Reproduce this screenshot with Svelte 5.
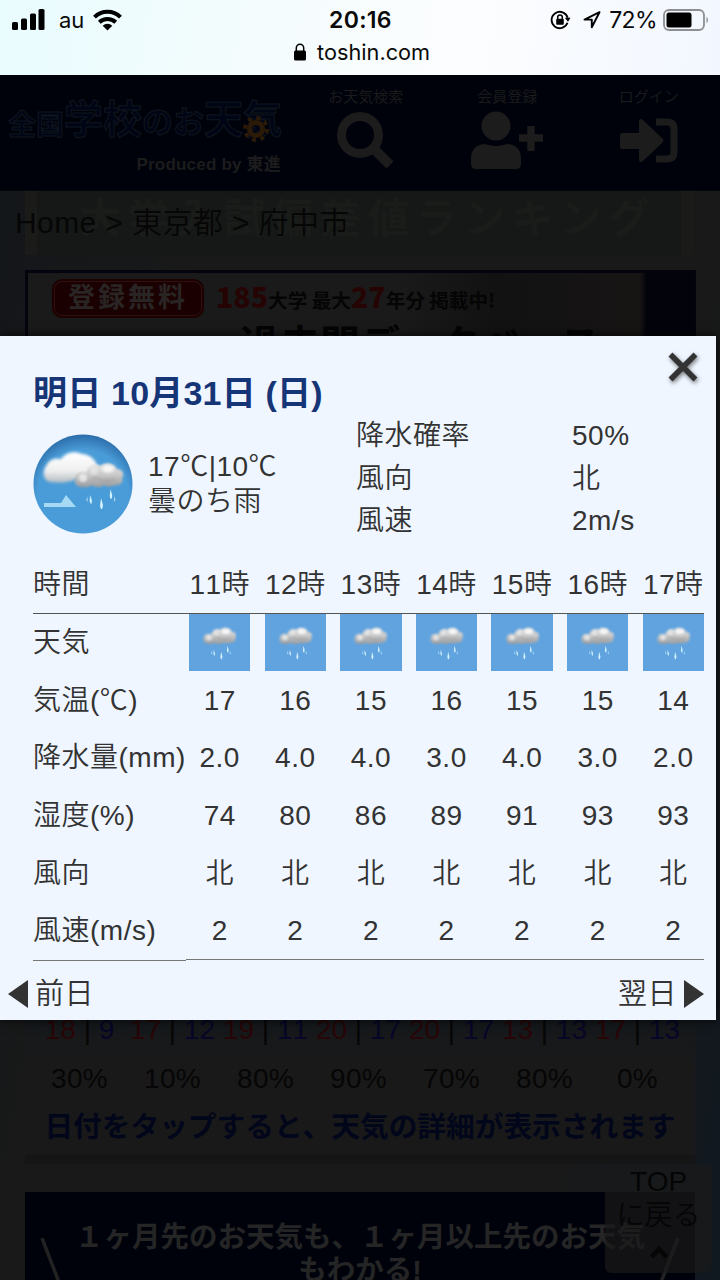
<script lang="ts">
  const summary = [
    { label: "降水確率", value: "50%" },
    { label: "風向", value: "北" },
    { label: "風速", value: "2m/s" },
  ];

  const hours = ["11時", "12時", "13時", "14時", "15時", "16時", "17時"];

  const rows = [
    { label: "気温(℃)", values: ["17", "16", "15", "16", "15", "15", "14"] },
    {
      label: "降水量(mm)",
      values: ["2.0", "4.0", "4.0", "3.0", "4.0", "3.0", "2.0"],
    },
    { label: "湿度(%)", values: ["74", "80", "86", "89", "91", "93", "93"] },
    { label: "風向", values: ["北", "北", "北", "北", "北", "北", "北"] },
    { label: "風速(m/s)", values: ["2", "2", "2", "2", "2", "2", "2"] },
  ];

  const week = [
    { high: 18, low: 9, rain: "30%" },
    { high: 17, low: 12, rain: "10%" },
    { high: 19, low: 11, rain: "80%" },
    { high: 20, low: 17, rain: "90%" },
    { high: 20, low: 17, rain: "70%" },
    { high: 13, low: 13, rain: "80%" },
    { high: 17, low: 13, rain: "0%" },
  ];
</script>

{#snippet rainCloud()}
  <g filter="url(#soft)">
    <path
      d="M8 28c-6 0-8-4-7-9 1-5 6-7 11-5 2-7 9-10 14-7 5-5 15-3 17 3 6 0 8 6 5 9 2 5-3 8-7 7-4 2-8 2-11 0-3 3-9 3-12 0-3 2-6 3-10 2z"
      fill="url(#grayCloud)"
    />
    <circle cx="9" cy="19" r="4" fill="#f4f4f4" opacity=".7" />
    <circle cx="20" cy="12" r="4" fill="#f2f2f2" opacity=".5" />
  </g>
  <g filter="url(#softer)">
    <ellipse cx="34" cy="10" rx="6" ry="3.500" fill="#fff" opacity=".8" />
    <path
      d="M18 21q3-4 7-1t8 0M32 24q4-5 10-3"
      fill="none"
      stroke="#8c8c8c"
      stroke-width="2"
      opacity=".4"
    />
  </g>
{/snippet}

{#snippet drops()}
  <g fill="#d4f2ff">
    <path d="M16 33l1.800 5v3l-1 1-1.200-3z" />
    <path d="M13 34l.8 4-.6 2-.8-2z" opacity=".7" />
    <path d="M27 36l2 7-.8 4-1.200 0-1-3z" />
    <path d="M36.500 27l1.700 6-.2 3.500h-1.800l-.4-3z" />
    <path d="M40.500 34l.9 4-.7 2-.8-2z" opacity=".7" />
  </g>
{/snippet}

<!-- shared gradients -->
<svg class="defs" width="0" height="0" aria-hidden="true">
  <defs>
    <linearGradient id="grayCloud" x1="0" y1="0" x2="0" y2="1">
      <stop offset="0" stop-color="#e6e6e6" />
      <stop offset=".5" stop-color="#c8c8c8" />
      <stop offset="1" stop-color="#979a9e" />
    </linearGradient>
    <linearGradient id="whiteCloud" x1="0" y1="0" x2="0" y2="1">
      <stop offset="0" stop-color="#fff" />
      <stop offset=".6" stop-color="#f0f0f0" />
      <stop offset="1" stop-color="#b5bdc2" />
    </linearGradient>
    <radialGradient id="sky" cx=".5" cy=".62" r=".62">
      <stop offset=".75" stop-color="#4a9cd8" />
      <stop offset="1" stop-color="#2b6daa" />
    </radialGradient>
    <filter id="soft" x="-20%" y="-20%" width="140%" height="140%">
      <feGaussianBlur stdDeviation="1.200" />
    </filter>
    <filter id="softer" x="-40%" y="-40%" width="180%" height="180%">
      <feGaussianBlur stdDeviation="1.800" />
    </filter>
  </defs>
</svg>

<div class="screen">
  <!-- Status bar -->
  <div class="status">
    <div class="status-row">
      <div class="status-left">
        <svg width="33" height="21" viewBox="0 0 33 21">
          <rect x="0" y="13" width="6" height="8" rx="1.5" />
          <rect x="9" y="9.500" width="6" height="11.500" rx="1.500" />
          <rect x="18" y="4.500" width="6" height="16.500" rx="1.500" />
          <rect x="26.500" y="0" width="6" height="21" rx="1.500" />
        </svg>
        <span class="carrier">au</span>
        <svg width="29" height="22" viewBox="0 0 29 22">
          <g fill="none" stroke="#000" stroke-width="4">
            <path d="M1.500 8.200a18.500 18.500 0 0 1 26 0" />
            <path d="M6.300 13.300a12 12 0 0 1 16.400 0" />
          </g>
          <path d="M14.500 21.500l-4.800-4.800a7 7 0 0 1 9.600 0z" />
        </svg>
      </div>
      <div class="clock">20:16</div>
      <div class="status-right">
        <svg width="21" height="20" viewBox="0 0 21 20">
          <path
            d="M17.500 12.800a8.200 8.200 0 1 1 .2-5"
            fill="none"
            stroke="#000"
            stroke-width="1.800"
          />
          <path d="M14.800 7.800h5.700l-2.500 4z" />
          <rect x="6.200" y="8.700" width="7.600" height="6" rx="1" />
          <path
            d="M7.700 9V7.200a2.300 2.300 0 0 1 4.600 0V9"
            fill="none"
            stroke="#000"
            stroke-width="1.500"
          />
        </svg>
        <svg class="arrow" width="18" height="18" viewBox="0 0 18 18">
          <path
            d="M16.500 1.200L1.500 8.600h7.300v7.600z"
            fill="none"
            stroke="#000"
            stroke-width="1.900"
            stroke-linejoin="round"
          />
        </svg>
        <span class="percent">72%</span>
        <svg width="46" height="22" viewBox="0 0 46 22">
          <rect
            x="1"
            y="1"
            width="40"
            height="20"
            rx="5"
            fill="none"
            stroke="#8d8f91"
            stroke-width="1.800"
          />
          <rect x="3.500" y="3.500" width="25" height="15" rx="2.500" />
          <path d="M43.500 7.500q3 3.500 0 7z" fill="#8d8f91" />
        </svg>
      </div>
    </div>
    <div class="address">
      <svg width="12" height="18" viewBox="0 0 12 18">
        <rect x="0" y="7.500" width="12" height="10" rx="1.500" />
        <path
          d="M2.300 8V5a3.700 3.700 0 0 1 7.400 0v3"
          fill="none"
          stroke="#000"
          stroke-width="1.500"
        />
      </svg>
      <span>toshin.com</span>
    </div>
  </div>

  <!-- Page behind the dialog -->
  <div class="page">
    <header class="header">
      <div class="brand">
        <div class="logo">
          <span class="small">全国</span><span class="big">学校</span><span
            class="mid">のお</span
          ><span class="big">天気</span>
          <svg class="gear" width="28" height="28" viewBox="-14 -14 28 28">
            <circle r="6.500" fill="none" stroke="#2b1a08" stroke-width="5" />
            <circle
              r="11"
              fill="none"
              stroke="#2b1a08"
              stroke-width="4"
              stroke-dasharray="4 4.640"
            />
          </svg>
        </div>
        <div class="produced">Produced by 東進</div>
      </div>
      <div class="menu">
        <div class="menu-item">
          <span>お天気検索</span>
          <svg width="60" height="60" viewBox="0 0 60 60">
            <circle
              cx="24"
              cy="24"
              r="18.500"
              fill="none"
              stroke="#1c1c1c"
              stroke-width="9"
            />
            <path
              d="M39 39l15 15"
              stroke="#1c1c1c"
              stroke-width="10"
            />
          </svg>
        </div>
        <div class="menu-item">
          <span>会員登録</span>
          <svg width="74" height="60" viewBox="0 0 74 60" fill="#1c1c1c">
            <circle cx="26" cy="15" r="14.500" />
            <path
              d="M15 33q11 4 22 0q14 1 14 15v5q0 5-5 5H6q-5 0-5-5v-5q0-14 14-15z"
            />
            <path
              d="M49 27h24M61 15v25"
              stroke="#1c1c1c"
              stroke-width="7.500"
            />
          </svg>
        </div>
        <div class="menu-item">
          <span>ログイン</span>
          <svg width="60" height="60" viewBox="0 0 60 60" fill="#1c1c1c">
            <path
              d="M3 22h17V11q0-5 4-2l19 18q3 2.500 0 5L24 50q-4 3-4-2V38H3q-2 0-2-2V24q0-2 2-2z"
            />
            <path
              d="M37 11h11q7 0 7 7v23q0 7-7 7H37"
              fill="none"
              stroke="#1c1c1c"
              stroke-width="7"
            />
          </svg>
        </div>
      </div>
    </header>

    <div class="crumb-area">
      <div class="ranking">大学入試偏差値ランキング</div>
      <div class="crumbs">Home &gt; 東京都 &gt; 府中市</div>
    </div>

    <div class="ad">
      <div class="ad-line">
        <span class="free">登録無料</span>
        <span class="copy"
          ><b>185</b>大学 最大<b>27</b>年分 掲載中!</span
        >
      </div>
      <div class="ad-title">過去問データベース</div>
    </div>

    <div class="week">
      <div class="week-row">
        {#each week as day}
          <span
            ><i class="high">{day.high}</i> | <i class="low">{day.low}</i></span
          >
        {/each}
      </div>
      <div class="week-row rain">
        {#each week as day}
          <span>{day.rain}</span>
        {/each}
      </div>
      <p class="notice">日付をタップすると、天気の詳細が表示されます</p>
    </div>

    <div class="promo">
      <svg class="slash" width="30" height="60" viewBox="0 0 30 60">
        <path d="M3 0L26 60" stroke="#222" stroke-width="3.500" />
      </svg>
      <div>１ヶ月先のお天気も、１ヶ月以上先のお天気<br />もわかる!</div>
      <svg class="slash" width="30" height="60" viewBox="0 0 30 60">
        <path d="M27 0L4 60" stroke="#222" stroke-width="3.500" />
      </svg>
    </div>
  </div>

  <div class="to-top">
    <span>TOP</span>
    <span>に戻る</span>
    <svg width="20" height="14" viewBox="0 0 20 14">
      <path
        d="M2.500 12L10 4l7.500 8"
        fill="none"
        stroke="#060606"
        stroke-width="4.500"
      />
    </svg>
  </div>

  <!-- Daily detail dialog -->
  <div class="modal">
    <svg class="close" width="32" height="32" viewBox="0 0 32 32">
      <path
        d="M3.500 3.500l25 25M28.500 3.500l-25 25"
        stroke="#333"
        stroke-width="5.500"
      />
    </svg>
    <h1>明日 10月31日 (日)</h1>

    <div class="overview">
      <svg class="today" width="100" height="100" viewBox="0 0 100 100">
        <circle cx="50" cy="50" r="49.500" fill="url(#sky)" />
        <path
          d="M19 48c-9 0-10-10-6-16 3-6 8-9 15-7 4-6 13-9 21-5 7 0 13 5 15 11 7 4 4 13-3 13-6 3-12 1-17 0-7 5-17 5-25 4z"
          fill="url(#whiteCloud)"
          filter="url(#softer)"
        />
        <g transform="translate(41 25)">{@render rainCloud()}</g>
        <g transform="translate(41 28)">{@render drops()}</g>
        <path d="M11 69h17l5-8 10 12H11z" fill="#a5d9f4" />
      </svg>
      <div class="temps">
        <div>17℃|10℃</div>
        <div>曇のち雨</div>
      </div>
      <div class="summary">
        {#each summary as item}
          <div class="summary-row">
            <span class="name">{item.label}</span>
            <span>{item.value}</span>
          </div>
        {/each}
      </div>
    </div>

    <div class="table">
      <div class="row head">
        <span class="label">時間</span>
        {#each hours as hour}
          <span class="cell">{hour}</span>
        {/each}
      </div>
      <div class="row">
        <span class="label">天気</span>
        {#each hours as hour}
          <span class="cell tile">
            <svg width="61" height="57" viewBox="0 0 61 57">
              <g transform="translate(14 11) scale(.67)">
                {@render rainCloud()}
                <g transform="translate(0 4)">{@render drops()}</g>
              </g>
            </svg>
          </span>
        {/each}
      </div>
      {#each rows as row}
        <div class="row">
          <span class="label">{row.label}</span>
          {#each row.values as value}
            <span class="cell">{value}</span>
          {/each}
        </div>
      {/each}
      <div class="rule"><i></i><i></i></div>
    </div>

    <div class="nav">
      <span
        ><svg width="20" height="28" viewBox="0 0 20 28"
          ><path d="M20 0v28L0 14z" fill="#333" /></svg
        >前日</span
      >
      <span
        >翌日<svg width="20" height="28" viewBox="0 0 20 28"
          ><path d="M0 0v28l20-14z" fill="#333" /></svg
        ></span
      >
    </div>
  </div>
</div>

<style>
  :global(body) {
    margin: 0;
    background: #191919;
  }

  .defs {
    position: absolute;
  }

  svg {
    display: block;
    flex-shrink: 0;
  }

  i {
    font-style: normal;
  }

  .screen {
    position: relative;
    width: 720px;
    height: 1280px;
    overflow: hidden;
    font-family: "Liberation Sans", "Noto Sans CJK JP", sans-serif;
    font-size: 28px;
    font-weight: 350;
    font-kerning: none;
    white-space: nowrap;
  }

  /* Status bar */
  .status {
    height: 75px;
    background: linear-gradient(100deg, #e9fcfe 0%, #f4fcfd 35%, #fcfdfe 65%, #f2f7ff 100%);
    font-family: Inter, sans-serif;
    font-weight: 400;
    color: #0a0a0a;
  }

  .status-row {
    display: grid;
    grid-template-columns: 1fr auto 1fr;
    align-items: center;
    height: 39px;
    padding: 0 11px 0 12px;
  }

  .status-left,
  .status-right {
    display: flex;
    align-items: center;
  }

  .status-right {
    justify-content: flex-end;
  }

  .carrier {
    margin: 0 9px 0 14px;
    font-size: 22px;
  }

  .clock {
    font-size: 23px;
    font-weight: 600;
    letter-spacing: 0.3px;
  }

  .arrow {
    margin: 0 8px 0 12px;
  }

  .percent {
    margin-right: 6px;
    font-size: 23px;
    letter-spacing: -0.6px;
  }

  .address {
    display: flex;
    justify-content: center;
    align-items: center;
    gap: 11px;
    height: 26px;
    padding-left: 4px;
    font-size: 21.700px;
  }

  /* Page */
  .page {
    height: 1205px;
    background: linear-gradient(100deg, #13161a 0%, #191919 25%, #191919 80%, #101820 100%);
  }

  .header {
    display: flex;
    height: 115px;
    border-bottom: 1px solid #05070a;
    background: #00020b;
    color: #1c1c1c;
  }

  .brand {
    width: 282px;
    padding-left: 8px;
    box-sizing: border-box;
  }

  .logo {
    display: flex;
    align-items: flex-end;
    height: 69px;
    position: relative;
    font-weight: 700;
    color: #000516;
    -webkit-text-stroke: 1px #10161c;
  }

  .logo .small {
    font-size: 28px;
    line-height: 37px;
  }

  .logo .big {
    font-size: 39px;
    line-height: 48px;
  }

  .logo .mid {
    font-size: 31px;
    line-height: 42px;
  }

  .gear {
    position: absolute;
    right: 12px;
    bottom: 1px;
  }

  .produced {
    margin-top: 9px;
    font-size: 17px;
    font-weight: 700;
    line-height: 24px;
    letter-spacing: 0.2px;
    text-align: right;
    padding-right: 1px;
  }

  .menu {
    display: flex;
    flex: 1;
    padding: 12px 0 0 13px;
  }

  .menu-item {
    display: flex;
    flex-direction: column;
    align-items: center;
    width: 141.500px;
    font-size: 15px;
    line-height: 20px;
    gap: 4px;
  }

  .crumb-area {
    position: relative;
    height: 64px;
    box-sizing: border-box;
    padding: 10px 15px;
  }

  /* banner that has scrolled under the breadcrumb */
  .ranking {
    position: absolute;
    top: 0;
    left: 25px;
    width: 668px;
    height: 64px;
    box-sizing: border-box;
    padding-left: 43px;
    border: solid #1b1b1a;
    border-width: 0 12px;
    background: #151816;
    color: #1a1c1a;
    font-size: 41px;
    font-weight: 700;
    line-height: 56px;
    letter-spacing: 7px;
  }

  .crumbs {
    position: relative;
    color: #060606;
    line-height: 44px;
    font-size: 30px;
    letter-spacing: 0.4px;
  }

  .ad {
    box-sizing: border-box;
    width: 671px;
    height: 82px;
    margin: 15px 0 0 25px;
    padding: 5px 25px 0;
    border: 3px solid #03040d;
    background: linear-gradient(90deg, #1a1a1a 55%, #121212 70%, #171414 92%, #03040b 93%);
    overflow: hidden;
  }

  .ad-line {
    display: flex;
    align-items: center;
    gap: 13px;
    height: 40px;
  }

  .free {
    width: 146px;
    height: 33px;
    border: 1px solid #301010;
    border-radius: 8px;
    outline: 2px solid #1d0000;
    background: #1b0001;
    color: #292524;
    font-size: 27px;
    font-weight: 700;
    line-height: 33px;
    letter-spacing: 3px;
    text-align: center;
    margin-left: 1px;
  }

  .copy {
    margin-left: 1px;
    color: #050505;
    font-family: "Noto Sans CJK JP", sans-serif;
    font-size: 19.600px;
    font-weight: 700;
    line-height: 40px;
  }

  .copy b {
    color: #260404;
    font-size: 28.500px;
  }

  .ad-title {
    margin: 5px 0 0 187px;
    color: #040404;
    font-size: 40px;
    font-weight: 700;
    line-height: 44px;
  }

  .week {
    width: 670px;
    height: 156px;
    margin: 656px 0 0 25px;
    box-sizing: border-box;
    border-bottom: 9px solid #151515;
    background: linear-gradient(#14181c, #191919 40%);
    color: #060606;
  }

  .week-row {
    display: flex;
    height: 44px;
    padding-left: 8px;
    line-height: 44px;
  }

  .week-row span {
    width: 93px;
    text-align: center;
  }

  .week-row.rain {
    margin-top: 5px;
    letter-spacing: 0.3px;
  }

  .high {
    color: #280608;
  }

  .low {
    color: #080628;
  }

  .notice {
    margin: 3px 0 0;
    color: #02061a;
    font-size: 28.700px;
    font-weight: 700;
    line-height: 46px;
    text-align: center;
  }

  .promo {
    display: flex;
    justify-content: space-between;
    width: 670px;
    height: 88px;
    margin: 28px 0 0 25px;
    padding: 29px 14px 0;
    box-sizing: border-box;
    background: #00020b;
    color: #252525;
    font-size: 28.500px;
    font-weight: 700;
    line-height: 33px;
    text-align: center;
    overflow: hidden;
  }

  .slash {
    margin-top: 17px;
  }

  .to-top {
    position: absolute;
    top: 1165px;
    left: 605px;
    display: flex;
    flex-direction: column;
    align-items: center;
    width: 107px;
    height: 108px;
    border-radius: 6px;
    background: rgba(25, 25, 25, 0.7);
    color: #050505;
    line-height: 34px;
  }

  .to-top svg {
    margin-top: 12px;
  }

  /* Dialog */
  .modal {
    position: absolute;
    top: 336px;
    left: 0;
    width: 716px;
    height: 684px;
    box-sizing: border-box;
    padding: 33px 12px 0 33px;
    background: #eff6ff;
    box-shadow: 0 0 10px rgba(0, 0, 0, 0.8);
    color: #333;
    letter-spacing: 0.5px;
  }

  .close {
    position: absolute;
    top: 15px;
    right: 17px;
    filter: drop-shadow(1px 2px 2px rgba(0, 0, 0, 0.5));
  }

  h1 {
    margin: 0;
    color: #163577;
    font-size: 34px;
    font-weight: 700;
    line-height: 49px;
    height: 50px;
    letter-spacing: 0.2px;
  }

  .overview {
    display: flex;
    height: 141px;
  }

  .today {
    margin-top: 15px;
  }

  .temps {
    width: 208px;
    padding: 30px 0 0 15px;
    line-height: 35px;
    letter-spacing: 0.5px;
  }

  .summary-row {
    display: flex;
    height: 42.500px;
    line-height: 36px;
  }

  .name {
    width: 216px;
  }

  .summary {
    margin-top: -1px;
  }

  .row {
    display: flex;
    gap: 14.300px;
    height: 57.700px;
    line-height: 57px;
  }

  .row.head {
    height: 53px;
    line-height: 50px;
    border-bottom: 1px solid #555;
  }

  .label {
    flex-shrink: 0;
    width: 141.800px;
  }

  .row:not(.head) .label {
    line-height: 58.500px;
  }

  .cell {
    display: flex;
    justify-content: center;
    flex-shrink: 0;
    width: 61.300px;
  }

  .tile {
    height: 57px;
    background: #60a3df;
  }

  .rule {
    display: flex;
    align-items: flex-start;
    height: 2px;
    margin-top: -1px;
  }

  .rule i {
    flex: 1;
    border-top: 1px solid #777;
  }

  .rule i:first-child {
    flex: 0 0 153px;
    margin-top: 1px;
  }

  .nav {
    display: flex;
    justify-content: space-between;
    margin: 10px 0 0 -25px;
    line-height: 46px;
    font-size: 29px;
  }

  .nav span {
    display: flex;
    align-items: center;
    gap: 7px;
  }
</style>
